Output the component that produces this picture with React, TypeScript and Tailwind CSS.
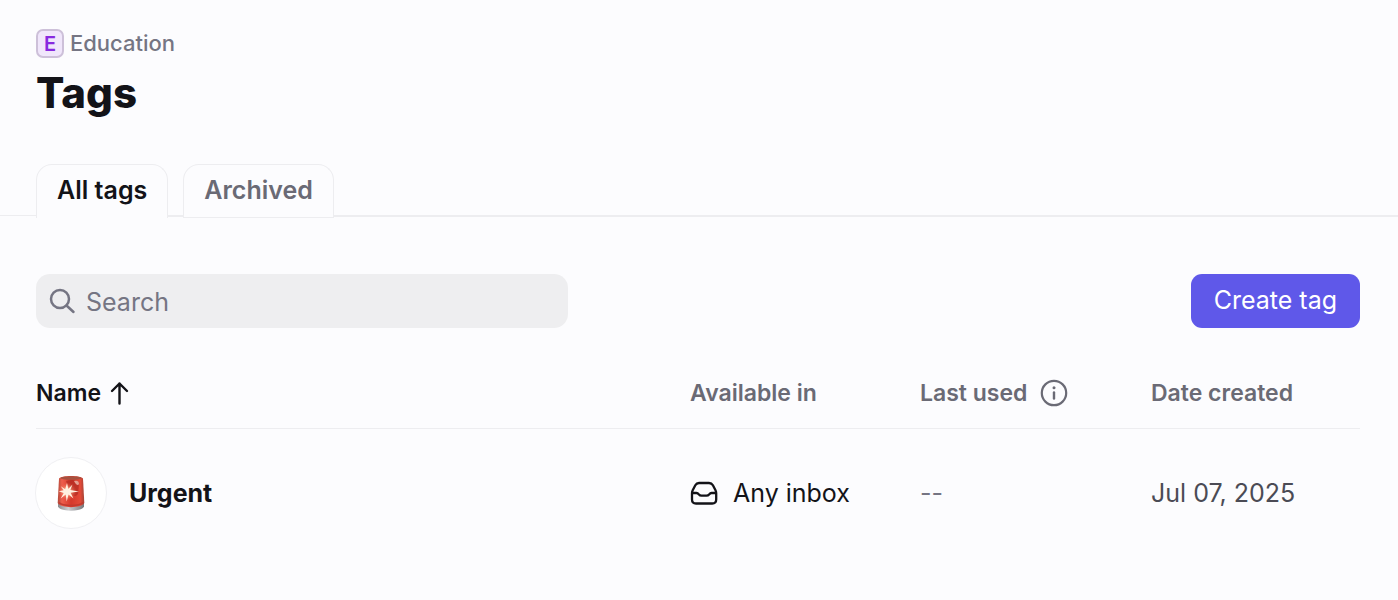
import { useState } from "react";

function SearchIcon() {
  return (
    <svg width="28" height="28" viewBox="0 0 28 28" fill="none" stroke="#757583" strokeWidth="2.5" strokeLinecap="round" aria-hidden="true">
      <circle cx="12" cy="12" r="9" />
      <path d="M18.5 18.5 25.5 25" />
    </svg>
  );
}

function ArrowUpIcon() {
  return (
    <svg width="20" height="24" viewBox="0 0 20 24" fill="none" stroke="currentColor" strokeWidth="2.4" strokeLinecap="round" strokeLinejoin="round" aria-hidden="true">
      <path d="M10.5 22.500V2.500M3 10 10.5 2.500 18 10" />
    </svg>
  );
}

function InfoIcon() {
  return (
    <svg width="28" height="28" viewBox="0 0 28 28" fill="none" stroke="currentColor" strokeLinecap="round" aria-hidden="true">
      <circle cx="14" cy="14" r="12.2" strokeWidth="2.2" />
      <path d="M14 13.5v6" strokeWidth="2.4" />
      <circle cx="14" cy="8.8" r="1.5" fill="currentColor" stroke="none" />
    </svg>
  );
}

function InboxIcon() {
  return (
    <svg width="28" height="24" viewBox="0 0 28 24" fill="none" stroke="#131318" strokeWidth="2.3" strokeLinecap="round" strokeLinejoin="round" aria-hidden="true">
      <path d="M9 2h10c2 0 3 .7 3.9 2.3l2.600 5c.6 1.200.7 1.700.7 3V18.500c0 2.700-1.300 4-4 4H6c-2.700 0-4-1.300-4-4v-6.200c0-1.300.1-1.800.7-3l2.600-5C6.200 2.700 7 2 9 2Z" />
      <path d="M2.400 12h4.100c1 0 1.500.3 2.200 1.200.9 1.100 1.500 1.500 2.800 1.500h5c1.300 0 1.900-.4 2.800-1.500.7-.9 1.200-1.200 2.200-1.200h4.100" />
    </svg>
  );
}

function SirenIcon() {
  return (
    <svg width="30" height="38" viewBox="0 0 30 38" role="img" aria-label="Siren">
      <defs>
        <linearGradient id="glass" x1="0" x2="1">
          <stop offset="0" stopColor="#b04a3a" />
          <stop offset=".16" stopColor="#ee5e4c" />
          <stop offset=".5" stopColor="#d5392b" />
          <stop offset=".85" stopColor="#e34a38" />
          <stop offset="1" stopColor="#a34336" />
        </linearGradient>
        <linearGradient id="metal" x1="0" x2="1">
          <stop offset="0" stopColor="#8c8c8f" />
          <stop offset=".4" stopColor="#cdced0" />
          <stop offset="1" stopColor="#77787b" />
        </linearGradient>
        <radialGradient id="glow">
          <stop offset="0" stopColor="#fff8e8" />
          <stop offset=".3" stopColor="#ffc5a4" stopOpacity=".75" />
          <stop offset="1" stopColor="#f35f42" stopOpacity="0" />
        </radialGradient>
      </defs>
      <path d="M2 29v3.500C4 38 26 38 28 32.500V29Z" fill="url(#metal)" />
      <path d="M3 4.500C5 1 25 1 27 4.500L28.300 29C26 34.500 4 34.500 1.700 29Z" fill="url(#glass)" />
      <ellipse cx="15" cy="4" rx="10.500" ry="1.700" fill="#a65240" />
      <path d="M10 7c5-2 12-1 13 3l-1 10c-2 3-5 2-7 0Z" fill="#aa281f" opacity=".6" />
      <path d="M18 7c3-1 5 0 5 3-1 2-3 1-5-3Z" fill="#e4a092" />
      <path d="M3 28.500c4 4 20 4 24 0" fill="none" stroke="#c23a2e" strokeWidth="1.500" />
      <circle cx="11.500" cy="17.500" r="9" fill="url(#glow)" />
      <path d="m11 9 1.300 6 4.200-4.500-2.200 5.500 8.700 1.500-8.500 1.200 3 5.800-5-4-1.800 7-1-7-5 4 3-5.500-5-1.700 5-1-3-4 4.500 3Z" fill="#fff2e0" />
    </svg>
  );
}

const tabBase = "flex h-[54px] items-center rounded-t-[16px] border border-b-0 border-[#ededf0] bg-[#fcfcfe] px-5 pb-[2px] text-[25px] font-semibold";

export default function App() {
  const [tab, setTab] = useState("all");
  return (
    <main className="min-h-screen bg-[#fcfcfe] pt-[29px] font-['Inter',sans-serif] text-[#131318]">
      <header className="px-9">
        <a href="#education" className="flex h-[29px] w-fit items-center gap-[6px] text-[22px] font-medium text-[#757583]">
          <span className="flex h-[29px] w-7 items-center justify-center rounded-[7px] border-2 border-[#cdc0d9] bg-[#f0e6fb] text-[20px] font-semibold text-[#8829df]">E</span>
          Education
        </a>
        <h1 className="mt-2 text-[42px] leading-[54px] font-extrabold">Tags</h1>
      </header>

      <nav className="mt-11 flex" aria-label="Tag views">
        <span className="mt-[51px] h-px w-9 bg-[#ededf0]" />
        <button type="button" aria-pressed={tab === "all"} onClick={() => setTab("all")} className={`${tabBase} ${tab === "all" ? "text-[#131318]" : "text-[#6a6a75]"}`}>All tags</button>
        <span className="mt-[51px] h-[2px] w-[15px] bg-[#ededf0]" />
        <button type="button" aria-pressed={tab === "archived"} onClick={() => setTab("archived")} className={`${tabBase} shadow-[inset_0_-1px_0_#ededf0] ${tab === "archived" ? "text-[#131318]" : "text-[#6a6a75]"}`}>Archived</button>
        <span className="mt-[51px] h-[2px] flex-1 bg-[#ededf0]" />
      </nav>

      <div className="mt-14 flex justify-between pr-[38px] pl-9">
        <label className="flex h-[54px] w-[532px] items-center gap-[10px] rounded-[14px] bg-[#eeeef0] px-3">
          <SearchIcon />
          <input type="search" aria-label="Search" placeholder="Search" className="h-full min-w-0 flex-1 bg-transparent pt-px text-[25px] outline-none placeholder:text-[#757583]" />
        </label>
        <button type="button" className="h-[54px] rounded-[11px] bg-[#5f58e9] px-[23px] pb-px text-[25px] text-white">Create tag</button>
      </div>

      <div className="mt-[30px] pr-[38px] pl-9">
        <table className="w-full table-fixed border-collapse text-left">
          <colgroup>
            <col />
            <col className="w-[230px]" />
            <col className="w-[231px]" />
            <col className="w-[209px]" />
          </colgroup>
          <thead className="text-[23px] text-[#6a6a75]">
            <tr className="h-[70px] border-b border-[#ededf0]">
              <th scope="col" aria-sort="ascending" className="p-0 font-semibold text-[#131318]">
                <button type="button" className="flex items-center gap-2">Name <ArrowUpIcon /></button>
              </th>
              <th scope="col" className="p-0 font-semibold">Available in</th>
              <th scope="col" className="p-0 font-semibold"><span className="flex items-center gap-[13px]">Last used <InfoIcon /></span></th>
              <th scope="col" className="p-0 font-semibold">Date created</th>
            </tr>
          </thead>
          <tbody className="text-[25px]">
            <tr className="h-[130px]">
              <td className="p-0">
                <span className="flex items-center gap-[22px] font-bold">
                  <span className="-ml-px flex size-[72px] items-center justify-center rounded-full border border-[#f0f0f3] bg-white"><SirenIcon /></span>
                  Urgent
                </span>
              </td>
              <td className="p-0"><span className="flex items-center gap-[15px]"><InboxIcon />Any inbox</span></td>
              <td className="p-0 text-[#757583]">--</td>
              <td className="p-0 text-[#4b4b55]">Jul 07, 2025</td>
            </tr>
          </tbody>
        </table>
      </div>
    </main>
  );
}
